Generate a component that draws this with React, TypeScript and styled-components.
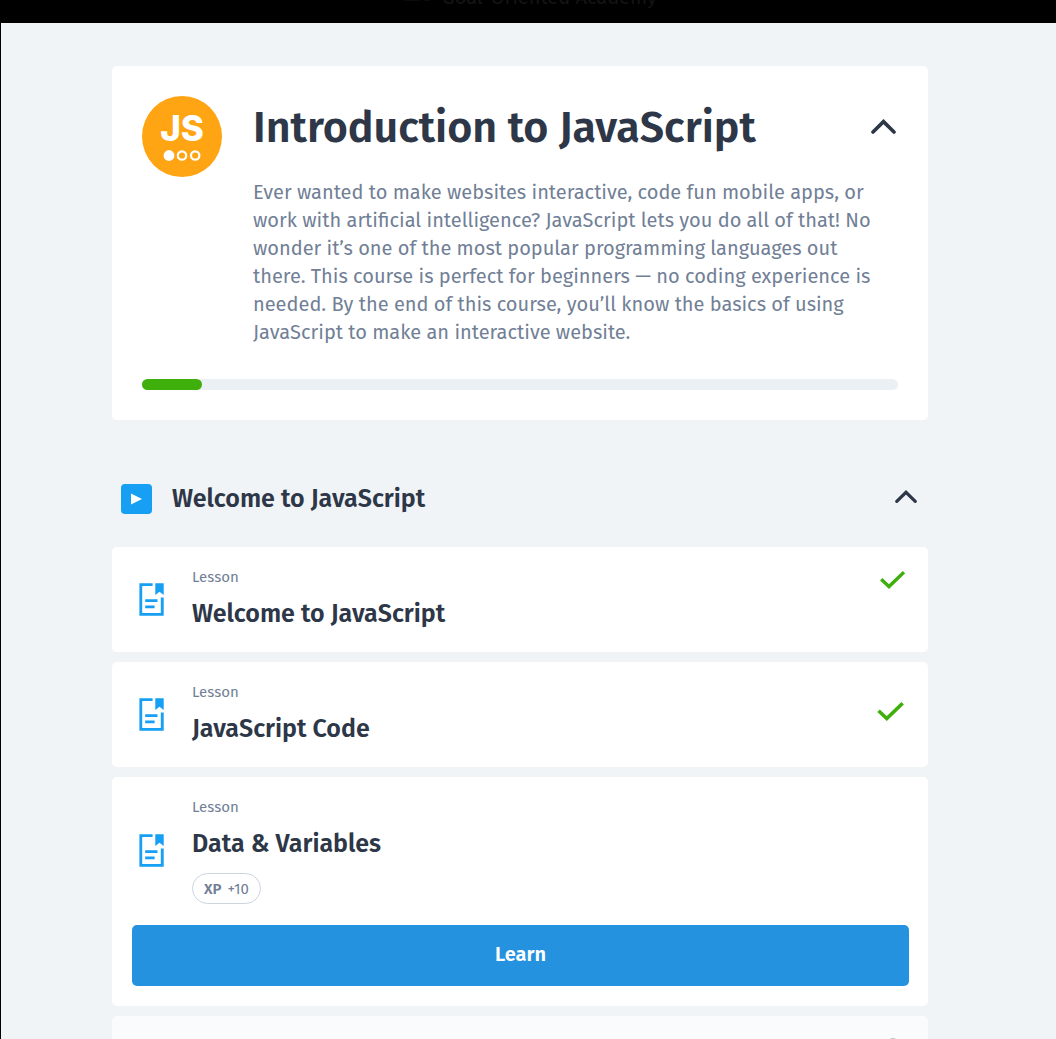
import React, { useState } from "react";
import styled, { createGlobalStyle } from "styled-components";

const GlobalStyle = createGlobalStyle`
  * { box-sizing: border-box; }
  body {
    margin: 0;
    background: #f0f4f7;
    font-family: "Fira Sans", "Noto Sans", "Open Sans", sans-serif;
    color: #2d3748;
  }
  h1, h2, h3, p, ul { margin: 0; padding: 0; }
  button { font: inherit; color: inherit; border: 0; cursor: pointer; }
`;

const Page = styled.div`
  height: 100vh;
  overflow: hidden;
  display: flex;
  flex-direction: column;
  border-left: 1px solid #000;
`;

const TopBar = styled.header`
  flex: none;
  height: 23px;
  overflow: hidden;
  display: flex;
  justify-content: center;
  align-items: flex-end;
  gap: 12px;
  padding: 0 0 14px 4px;
  background: #000;
  color: #141414;
  font-size: 20px;
  line-height: 24px;
`;

const BrandMark = styled.span`
  width: 26px;
  height: 24px;
  padding-bottom: 8px;
  display: flex;
  align-items: flex-end;
  gap: 4px;
  &::before, &::after { content: ""; height: 14px; background: #0b0b0b; }
  &::before { width: 16px; }
  &::after { width: 6px; }
`;

const Main = styled.main`
  padding: 43px 17px 0 0;
  display: flex;
  flex-direction: column;
  align-items: center;
`;

const Column = styled.div`
  width: 100%;
  max-width: 816px;
`;

const CourseCard = styled.section`
  padding: 30px;
  border-radius: 5px;
  background: #fff;
`;

const CourseHead = styled.div`
  display: flex;
  align-items: flex-start;
  gap: 31px;
`;

const CourseText = styled.div`
  flex: 1;
  min-width: 0;
`;

const TitleRow = styled.div`
  display: flex;
  align-items: center;
  justify-content: space-between;
  padding-right: 2px;
`;

const CourseTitle = styled.h1`
  font-size: 43px;
  line-height: 64px;
  font-weight: 600;
  white-space: nowrap;
`;

const Description = styled.p`
  margin-top: 18px;
  padding-right: 16px;
  font-size: 20px;
  line-height: 28px;
  color: #718096;
`;

const IconButton = styled.button`
  display: flex;
  padding: 0 0 3px;
  background: none;
`;

const Progress = styled.div`
  height: 11px;
  margin-top: 33px;
  border-radius: 6px;
  background: #ebf0f4;
`;

const ProgressFill = styled.div`
  height: 100%;
  border-radius: 6px;
  background: #3faf0c;
`;

const SectionHead = styled.div`
  display: flex;
  align-items: center;
  gap: 20px;
  height: 127px;
  padding: 30px 11px 0 9px;
`;

const SectionTitle = styled.h2`
  flex: 1;
  font-size: 25px;
  line-height: 34px;
  font-weight: 600;
`;

const PlayBadge = styled.span`
  display: flex;
  align-items: center;
  justify-content: center;
  width: 31px;
  height: 30px;
  border-radius: 4px;
  background: #169ff3;
`;

const LessonList = styled.ul`
  display: flex;
  flex-direction: column;
  gap: 10px;
  list-style: none;
`;

const LessonCard = styled.li<{ $locked?: boolean }>`
  border-radius: 5px;
  background: ${(p) => (p.$locked ? "#fafbfd" : "#fff")};
`;

const LessonRow = styled.div`
  display: flex;
  align-items: center;
  gap: 28px;
  padding: 20px 23px 21px 27px;
`;

const LessonText = styled.div`
  flex: 1;
`;

const Kind = styled.p`
  font-size: 15px;
  line-height: 20px;
  color: #718096;
`;

const LessonTitle = styled.h3`
  margin-top: 10px;
  font-size: 25px;
  line-height: 34px;
  font-weight: 600;
`;

const Status = styled.span<{ $top?: boolean }>`
  display: flex;
  align-self: ${(p) => (p.$top ? "flex-start" : "center")};
  padding: ${(p) => (p.$top ? "4px 0 0" : "0 1px 6px 0")};
`;

const XpPill = styled.span`
  display: flex;
  width: max-content;
  align-items: center;
  gap: 6px;
  height: 31px;
  margin-top: 12px;
  padding: 0 11px;
  border: 1px solid #cbd5e0;
  border-radius: 16px;
  font-size: 15px;
  color: #718096;
  b { font-weight: 600; }
`;

const ButtonRow = styled.div`
  padding: 0 19px 20px 20px;
`;

const LearnButton = styled.button`
  width: 100%;
  height: 61px;
  padding-bottom: 4px;
  border-radius: 5px;
  background: #2592e0;
  color: #fff;
  font-size: 20px;
  font-weight: 600;
`;

const Chevron = ({ size }: { size: number }) => (
  <svg width={size} height={size * 0.6} viewBox="0 0 25 15" fill="none" stroke="#2d3748" strokeWidth="3.6" strokeLinecap="round" aria-hidden="true">
    <path d="M2 13 12.5 2.6 23 13" />
  </svg>
);

const Check = ({ size }: { size: number }) => (
  <svg width={size} height={Math.round(size * 0.72)} viewBox="0 0 25 18" fill="none" stroke="#3faf0c" strokeWidth="3.4" aria-label="Completed" role="img">
    <path d="M1.2 8.3 9 15.6 24 1.2" />
  </svg>
);

const DocIcon = () => (
  <svg width="25" height="33" viewBox="0 0 25 33" fill="#169ff3" aria-hidden="true">
    <path d="M0.4 0.3H13.6V3.1H3.2V29.9H21.8V14.6H24.7V32.8H0.4Z" />
    <path d="M16.3 0.3H24.7V12L20.5 8.8 16.3 12Z" />
    <path d="M6.2 16.2H18.5V19H6.2ZM6.2 22.4H15.6V25.2H6.2Z" />
  </svg>
);

const CourseLogo = () => (
  <svg width="80" height="81" viewBox="0 0 80 81" aria-hidden="true">
    <ellipse cx="40" cy="40.5" rx="40" ry="40.5" fill="#ffa412" />
    <text x="40" y="45" textAnchor="middle" fill="#fff" fontFamily="Inter, sans-serif" fontWeight="800" fontSize="35">JS</text>
    <circle cx="27" cy="59.5" r="5.4" fill="#fff" />
    <circle cx="40" cy="59.5" r="4.2" fill="none" stroke="#fff" strokeWidth="2.2" />
    <circle cx="53.2" cy="59.5" r="4.2" fill="none" stroke="#fff" strokeWidth="2.2" />
  </svg>
);

const PlayIcon = () => (
  <svg width="11" height="12" viewBox="0 0 11 12" fill="#fff" aria-hidden="true">
    <path d="M0 0.5 11 6 0 11.5Z" />
  </svg>
);

const LockIcon = () => (
  <svg width="24" height="24" viewBox="0 0 24 24" fill="none" stroke="#a3a8b0" strokeWidth="2.4" aria-label="Locked" role="img">
    <path d="M6 12V9.5a6 6 0 0 1 12 0V12" />
    <rect x="2" y="12" width="20" height="10" rx="2" />
  </svg>
);

type Lesson = { title: string; check?: number; checkTop?: boolean; xp?: number };

const lessons: Lesson[] = [
  { title: "Welcome to JavaScript", check: 25, checkTop: true },
  { title: "JavaScript Code", check: 27 },
  { title: "Data & Variables", xp: 10 },
];

export default function App() {
  const [courseOpen, setCourseOpen] = useState(true);
  const [sectionOpen, setSectionOpen] = useState(true);
  const progress = 8;

  return (
    <>
      <GlobalStyle />
      <Page>
        <TopBar>
          <BrandMark />
          <span>Goal-Oriented Academy</span>
        </TopBar>
        <Main>
          <Column>
            <CourseCard>
              <CourseHead>
                <CourseLogo />
                <CourseText>
                  <TitleRow>
                    <CourseTitle>Introduction to JavaScript</CourseTitle>
                    <IconButton aria-label="Toggle course details" aria-expanded={courseOpen} onClick={() => setCourseOpen(!courseOpen)}>
                      <Chevron size={25} />
                    </IconButton>
                  </TitleRow>
                  {courseOpen && (
                    <Description>
                      Ever wanted to make websites interactive, code fun mobile apps, or work with artificial
                      intelligence? JavaScript lets you do all of that! No wonder it’s one of the most popular
                      programming languages out there. This course is perfect for beginners — no coding
                      experience is needed. By the end of this course, you’ll know the basics of using
                      JavaScript to make an interactive website.
                    </Description>
                  )}
                </CourseText>
              </CourseHead>
              <Progress role="progressbar" aria-label="Course progress" aria-valuenow={progress} aria-valuemin={0} aria-valuemax={100}>
                <ProgressFill style={{ width: `${progress}%` }} />
              </Progress>
            </CourseCard>

            <SectionHead>
              <PlayBadge><PlayIcon /></PlayBadge>
              <SectionTitle>Welcome to JavaScript</SectionTitle>
              <IconButton aria-label="Toggle section" aria-expanded={sectionOpen} onClick={() => setSectionOpen(!sectionOpen)}>
                <Chevron size={22} />
              </IconButton>
            </SectionHead>

            {sectionOpen && (
              <LessonList>
                {lessons.map((lesson) => (
                  <LessonCard key={lesson.title}>
                    <LessonRow>
                      <DocIcon />
                      <LessonText>
                        <Kind>Lesson</Kind>
                        <LessonTitle>{lesson.title}</LessonTitle>
                        {lesson.xp && <XpPill><b>XP</b>+{lesson.xp}</XpPill>}
                      </LessonText>
                      {lesson.check && (
                        <Status $top={lesson.checkTop}><Check size={lesson.check} /></Status>
                      )}
                    </LessonRow>
                    {lesson.xp && <ButtonRow><LearnButton>Learn</LearnButton></ButtonRow>}
                  </LessonCard>
                ))}
                <LessonCard $locked>
                  <LessonRow>
                    <LessonText />
                    <LockIcon />
                  </LessonRow>
                </LessonCard>
              </LessonList>
            )}
          </Column>
        </Main>
      </Page>
    </>
  );
}
